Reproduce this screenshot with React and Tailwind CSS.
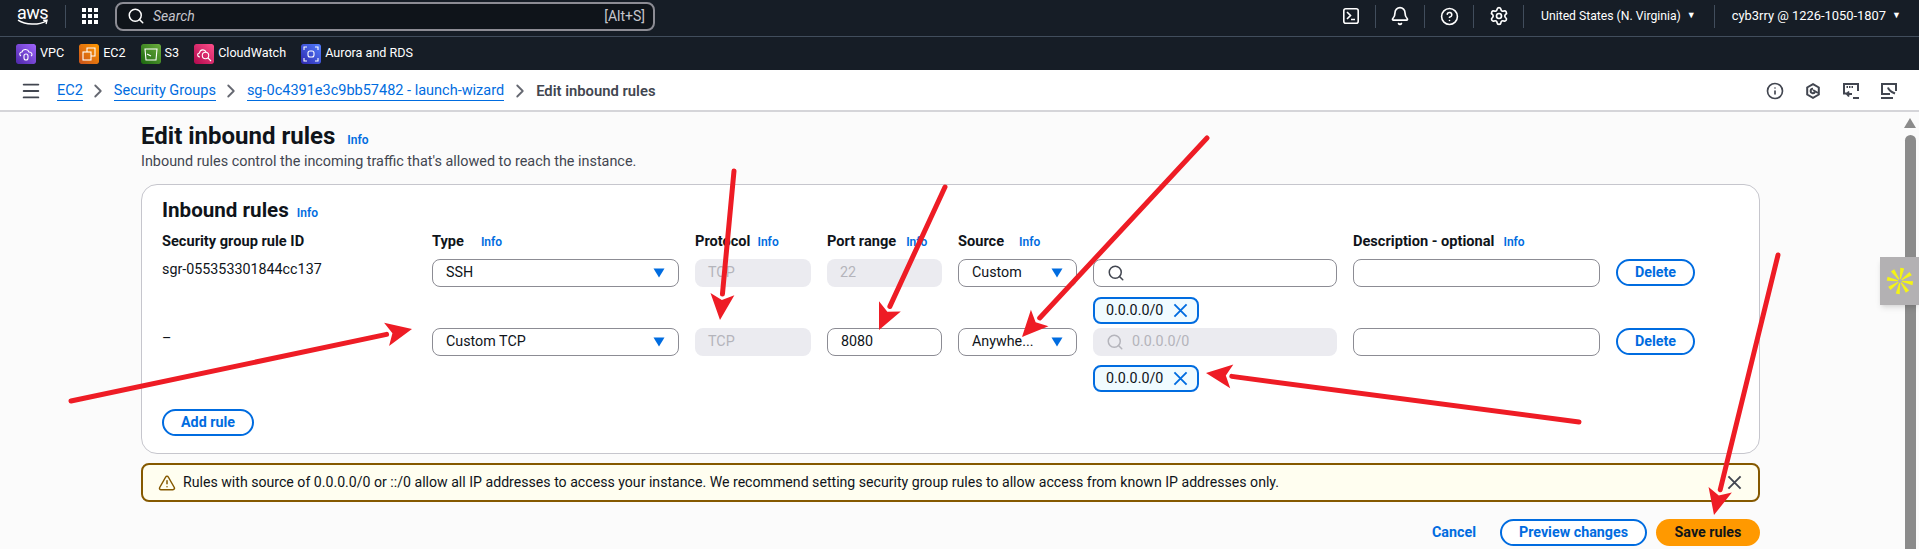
import React from "react";
import { Search, Bell, Settings, CircleHelp, Info, TriangleAlert, ChevronRight, Menu } from "lucide-react";

const font = { fontFamily: 'Roboto, sans-serif' };
const Link = ({ children, className = "" }) => <span className={`text-[#006ce0] font-semibold text-[12px] ${className}`}>{children}</span>;
const Caret = () => (<svg width="12" height="10" viewBox="0 0 12 10"><path d="M0.5 0.5H11.5L6 9.5Z" fill="#006ce0" /></svg>);
const Cross = ({ size, color, width = 2 }) => (
  <svg width={size} height={size} viewBox="0 0 16 16"><path d="M1.500 1.500L14.500 14.500M14.500 1.500L1.500 14.500" fill="none" stroke={color} strokeWidth={width} /></svg>
);
const Select = ({ label, w }) => (
  <div className={`h-[28px] ${w} border border-[#8c8c94] rounded-lg bg-white flex items-center justify-between pl-[13px] pr-[13px] text-[14.3px] text-[#0f141a]`}>
    <span>{label}</span><Caret />
  </div>
);
const Disabled = ({ label, w }) => (
  <div className={`h-[28px] ${w} rounded-lg bg-[#ebebf0] flex items-center px-[13px] text-[14.3px] text-[#b4b4bb]`}>{label}</div>
);
const Blank = ({ w, children }) => (
  <div className={`h-[28px] ${w} border border-[#8c8c94] rounded-lg bg-white flex items-center px-[13px] text-[14.3px] text-[#0f141a]`}>{children}</div>
);
const Token = () => (
  <div className="h-[27px] w-[106px] border-2 border-[#006ce0] rounded-lg bg-[#f0fbff] flex items-center gap-[10px] pl-[11px] text-[14.3px] text-[#0f141a]">
    <span>0.0.0.0/0</span><Cross size={15} color="#006ce0" />
  </div>
);
const Btn = ({ children, w }) => (
  <div className={`h-[27px] ${w} border-2 border-[#006ce0] rounded-full bg-white flex items-center justify-center text-[#006ce0] text-[14.3px] font-bold`}>{children}</div>
);
const Head = ({ label, gap }) => (
  <div className={`flex items-center ${gap} text-[14.6px] font-bold text-[#0f141a] whitespace-nowrap`}>{label}<Link>Info</Link></div>
);
const Svc = ({ from, to, children }) => (
  <svg width="20" height="20" viewBox="0 0 20 20" className="rounded-[2px]">
    <defs><linearGradient id={from} x1="0" y1="1" x2="1" y2="0"><stop offset="0" stopColor={from} /><stop offset="1" stopColor={to} /></linearGradient></defs>
    <rect width="20" height="20" rx="2" fill={`url(#${from})`} />
    <g fill="none" stroke="#fff" strokeWidth="1.1">{children}</g>
  </svg>
);
const Fav = ({ icon, label }) => (
  <div className="flex items-center gap-[4px] text-white text-[12.6px]">{icon}<span>{label}</span></div>
);
const Sep = () => <div className="w-px h-[23px] bg-[#414d5c]" />;
const Ico = ({ children }) => <div className="w-[16px] flex items-center justify-center">{children}</div>;

const arrows = [
  [71, 401, 412, 329], [734, 171, 720, 320], [945, 187, 879, 330],
  [1207, 138, 1022, 337], [1579, 422, 1206, 373], [1778, 255, 1714, 515],
];
const Arrow = ({ a }) => {
  const [x1, y1, x2, y2] = a;
  const l = Math.hypot(x2 - x1, y2 - y1), ux = (x2 - x1) / l, uy = (y2 - y1) / l;
  const bx = x2 - ux * 26, by = y2 - uy * 26, nx = -uy * 12, ny = ux * 12;
  return (
    <g>
      <line x1={x1} y1={y1} x2={bx} y2={by} stroke="#ee1c25" strokeWidth="5" strokeLinecap="round" />
      <polygon points={`${x2},${y2} ${bx + nx},${by + ny} ${bx + ux * 6},${by + uy * 6} ${bx - nx},${by - ny}`} fill="#ee1c25" />
    </g>
  );
};

export default function App() {
  const cols = "grid grid-cols-[254px_247px_116px_115px_119px_244px_247px_79px] gap-x-[16px]";
  return (
    <div style={font} className="relative w-[1919px] h-[549px] overflow-hidden bg-[#fbfbfb] flex flex-col">
      {/* top nav */}
      <div className="h-[37px] shrink-0 bg-[#161d26] border-b border-[#414d5c] flex items-center pl-[17px] pr-[18px] pb-[4px] text-white">
        <div className="w-[31px] flex flex-col items-center leading-none">
          <span className="text-[18px] font-normal leading-[13px] tracking-tight">aws</span>
          <svg width="31" height="7" viewBox="0 0 32 7"><path d="M1 1C9 6 22 6.5 30 2M27 1.2L31 1.2L30 5" fill="none" stroke="#fff" strokeWidth="1.4" /></svg>
        </div>
        <div className="ml-[17px]"><Sep /></div>
        <svg width="16" height="16" viewBox="0 0 16 16" fill="#fff" className="ml-[16px]">
          {[0, 6, 12].map((y) => [0, 6, 12].map((x) => <rect key={`${x}-${y}`} x={x} y={y} width="4" height="4" />))}
        </svg>
        <div className="ml-[17px] w-[540px] h-[29px] border-2 border-[#8c8c94] rounded-lg bg-[#0f141a] flex items-center pl-[10px] pr-[8px] text-[#c6c6cd] text-[14px]">
          <Search size={18} className="text-white" />
          <span className="italic ml-[8px]">Search</span>
          <span className="ml-auto">[Alt+S]</span>
        </div>
        <div className="ml-auto flex items-center text-white">
          <Ico><svg width="16" height="16" viewBox="0 0 16 16" fill="none" stroke="#fff" strokeWidth="1.6"><rect x="0.8" y="0.8" width="14.4" height="14.4" rx="2" /><path d="M4 4L7.500 7.500L4 11M8 11.500H12" /></svg></Ico>
          <div className="mx-[16px]"><Sep /></div>
          <Ico><Bell size={20} strokeWidth={2} className="shrink-0" /></Ico>
          <div className="mx-[16px]"><Sep /></div>
          <Ico><CircleHelp size={19} strokeWidth={2} className="shrink-0" /></Ico>
          <div className="ml-[16px] mr-[17px]"><Sep /></div>
          <Ico><Settings size={20} strokeWidth={2} className="shrink-0" /></Ico>
          <div className="ml-[16px] mr-[17px]"><Sep /></div>
          <span className="text-[12.2px]">United States (N. Virginia)</span>
          <span className="ml-[6px] text-[9px]">▼</span>
          <div className="ml-[18px] mr-[17px]"><Sep /></div>
          <span className="text-[12.9px]">cyb3rry @ 1226-1050-1807</span>
          <span className="ml-[6px] text-[9px]">▼</span>
        </div>
      </div>
      {/* favorites */}
      <div className="h-[33px] shrink-0 bg-[#161d26] flex items-center pl-[16px] gap-[15px]">
        <Fav label="VPC" icon={<Svc from="#4d27a8" to="#a166ff"><path d="M5 12C3 11 3.500 8 6 8C7 4.500 12 5 13 8C16 8 17 11 15 12" /><rect x="8" y="10" width="4" height="6" rx="2" /></Svc>} />
        <Fav label="EC2" icon={<Svc from="#c8511b" to="#ff9900"><rect x="4" y="8" width="8" height="8" /><path d="M8 8V4H16V12H12" /></Svc>} />
        <Fav label="S3" icon={<Svc from="#1b660f" to="#6cae3e"><path d="M4 5H16L15 16H5Z" /><path d="M6 10L10 12" /></Svc>} />
        <Fav label="CloudWatch" icon={<Svc from="#b0084d" to="#ff4f8b"><path d="M6 13C3 13 3 9 5.500 9C6 5 11 5 12 8" /><circle cx="11.500" cy="11.500" r="3.200" /><path d="M14 14L17 17" /></Svc>} />
        <Fav label="Aurora and RDS" icon={<Svc from="#2e27ad" to="#527fff"><rect x="7" y="7" width="6" height="6" rx="2" /><path d="M3 6V3H6M14 3H17V6M3 14V17H6M14 17H17V14" /></Svc>} />
      </div>
      {/* breadcrumb */}
      <div className="h-[42px] shrink-0 bg-white border-b-2 border-[#d5d5d9] flex items-center pl-[20px] pr-[22px] pt-[2px]">
        <Menu size={22} className="text-[#424650]" />
        <div className="ml-[15px] flex items-center text-[14.5px] text-[#006ce0]">
          <span className="border-b border-[#006ce0] leading-[18px]">EC2</span>
          <ChevronRight size={22} className="text-[#656871] mx-[4.5px]" />
          <span className="border-b border-[#006ce0] leading-[18px]">Security Groups</span>
          <ChevronRight size={22} className="text-[#656871] mx-[4.5px]" />
          <span className="border-b border-[#006ce0] leading-[18px]">sg-0c4391e3c9bb57482 - launch-wizard</span>
          <ChevronRight size={22} className="text-[#656871] mx-[5px]" />
          <span className="text-[#424650] font-semibold text-[14.8px]">Edit inbound rules</span>
        </div>
        <div className="ml-auto flex items-center gap-[22px] text-[#424650]">
          <Ico><Info size={18} strokeWidth={2.2} className="shrink-0" /></Ico>
          <Ico><svg width="14" height="16" viewBox="0 0 14 16" fill="none" stroke="#424650" strokeWidth="2"><path d="M7 1.200L12.800 4.500V11.500L7 14.800L1.200 11.500V4.500Z" /><path d="M9 8.500A2.200 2.200 0 1 1 7 5.800" /><path d="M7 7L12 10" /></svg></Ico>
          <Ico><svg width="16" height="16" viewBox="0 0 16 16" fill="none" stroke="#424650" strokeWidth="2"><path d="M5 10.500H1V1H15V8" /><path d="M3.500 4H10" strokeDasharray="1.500 1" /><path d="M4 11H9M6 8.500L4 11L6 13.500" /><path d="M10 15H16" /></svg></Ico>
          <Ico><svg width="16" height="16" viewBox="0 0 16 16" fill="none" stroke="#424650" strokeWidth="2"><path d="M15 8V1H1V11H9" /><path d="M7 4.500C7.500 7 9.500 8.500 14 10.500" /><path d="M0 15H12" /></svg></Ico>
        </div>
      </div>
      {/* body */}
      <div className="flex-1 pl-[141px] pr-[159px] flex flex-col">
        <div className="flex items-baseline gap-[12px] h-[39px] pt-[9px]">
          <h1 className="text-[24px] font-bold text-[#0f141a] leading-[30px]">Edit inbound rules</h1>
          <Link>Info</Link>
        </div>
        <p className="text-[14.4px] text-[#424650] leading-[18px] mt-[2px]">Inbound rules control the incoming traffic that's allowed to reach the instance.</p>
        <div className="mt-[13px] h-[270px] border border-[#c6c6cd] rounded-2xl bg-white pl-[20px] pt-[12px] flex flex-col">
          <div className="flex items-baseline gap-[8px] h-[26px]">
            <h2 className="text-[20.6px] font-bold text-[#0f141a] leading-[26px]">Inbound rules</h2>
            <Link>Info</Link>
          </div>
          <div className={`${cols} h-[20px] mt-[8px]`}>
            <div className="text-[14.6px] font-bold text-[#0f141a] whitespace-nowrap">Security group rule ID</div>
            <Head label="Type" gap="gap-[17px]" />
            <Head label="Protocol" gap="gap-[7px]" />
            <Head label="Port range" gap="gap-[10px]" />
            <Head label="Source" gap="gap-[15px]" />
            <div />
            <Head label="Description - optional" gap="gap-[9px]" />
          </div>
          <div className={`${cols} mt-[8px]`}>
            <div className="text-[14.3px] text-[#0f141a] leading-[20px]">sgr-055353301844cc137</div>
            <Select label="SSH" w="w-full" />
            <Disabled label="TCP" w="w-full" />
            <Disabled label="22" w="w-full" />
            <Select label="Custom" w="w-full" />
            <div className="flex flex-col gap-[10px]">
              <Blank w="w-full"><Search size={18} className="text-[#424650]" /></Blank>
              <Token />
            </div>
            <Blank w="w-full" />
            <Btn w="w-full">Delete</Btn>
          </div>
          <div className={`${cols} mt-[4px]`}>
            <div className="text-[14.3px] text-[#0f141a] leading-[20px]">–</div>
            <Select label="Custom TCP" w="w-full" />
            <Disabled label="TCP" w="w-full" />
            <Blank w="w-full">8080</Blank>
            <Select label="Anywhe..." w="w-full" />
            <div className="flex flex-col gap-[9px]">
              <div className="h-[28px] rounded-lg bg-[#ebebf0] flex items-center gap-[8px] px-[13px] text-[14.3px] text-[#b4b4bb]"><Search size={18} />0.0.0.0/0</div>
              <Token />
            </div>
            <Blank w="w-full" />
            <Btn w="w-full">Delete</Btn>
          </div>
          <div className="mt-[17px]"><Btn w="w-[92px]">Add rule</Btn></div>
        </div>
        <div className="mt-[9px] h-[39px] border-2 border-[#855900] rounded-lg bg-[#fffef0] flex items-center pl-[15px] pr-[16px] text-[#0f141a]">
          <TriangleAlert size={18} className="text-[#855900]" strokeWidth={2} />
          <span className="ml-[7px] text-[14.13px]">Rules with source of 0.0.0.0/0 or ::/0 allow all IP addresses to access your instance. We recommend setting security group rules to allow access from known IP addresses only.</span>
          <span className="ml-auto"><Cross size={15} color="#424650" /></span>
        </div>
        <div className="mt-[17px] flex items-center justify-end">
          <span className="text-[#006ce0] text-[14.3px] font-bold mr-[24px]">Cancel</span>
          <Btn w="w-[147px]">Preview changes</Btn>
          <div className="ml-[9px] w-[104px] h-[27px] rounded-full bg-[#ff9900] flex items-center justify-center text-[14.3px] font-bold text-[#0f141a]">Save rules</div>
        </div>
      </div>
      {/* scrollbar */}
      <div className="absolute right-[3px] top-[135px] bottom-0 w-[11px] rounded-t-full bg-[#8b8b8b]" />
      <div className="absolute right-[3px] top-[118px] w-0 h-0 border-l-[6px] border-r-[6px] border-b-[10px] border-l-transparent border-r-transparent border-b-[#8b8b8b]" />
      {/* widget */}
      <div className="absolute right-0 top-[257px] w-[39px] h-[48px] bg-[#b3b1b3] flex items-center justify-center shadow-md">
        <svg width="28" height="28" viewBox="-14 -14 28 28">
          {[0, 45, 90, 135, 180, 225, 270, 315].map((r) => (
            <polygon key={r} points="-2,-13 2,-13 0.500,-2 -0.500,-2" fill="#f4f416" transform={`rotate(${r + 10})`} />
          ))}
        </svg>
      </div>
      {/* annotation arrows */}
      <svg className="absolute inset-0 pointer-events-none" width="1919" height="549">
        {arrows.map((a, i) => <Arrow key={i} a={a} />)}
      </svg>
    </div>
  );
}
